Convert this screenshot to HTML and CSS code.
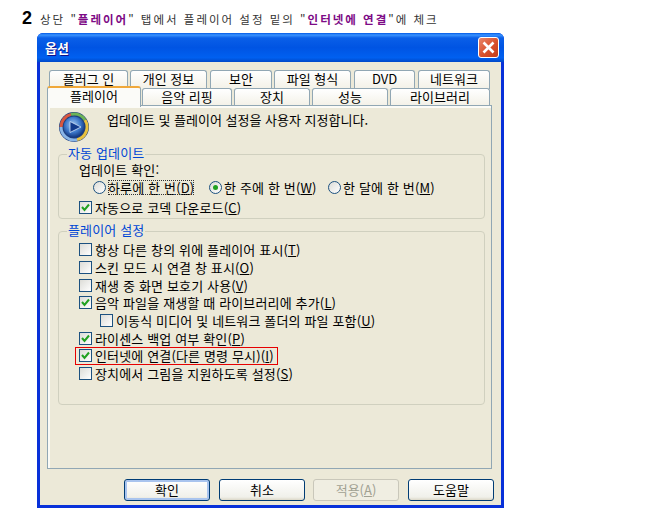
FILE: index.html
```html
<!DOCTYPE html>
<html lang="ko">
<head>
    <meta charset="UTF-8">
    <title>옵션</title>
    <link rel="stylesheet" href="styles.css">
</head>
<body>
    <div class="step">
        <span class="step-num">2</span>
        <p>상단 "<b>플레이어</b>" 탭에서 플레이어 설정 밑의 "<b>인터넷에 연결</b>"에 체크</p>
    </div>

    <div class="window">
        <div class="titlebar">
            <span class="title">옵션</span>
            <span class="close">
                <svg width="13" height="13" viewBox="0 0 13 13"><path d="M1.5 1.5 L11.5 11.5 M11.5 1.5 L1.5 11.5" stroke="#fff" stroke-width="2.6"/></svg>
            </span>
        </div>
        <div class="client">
            <div class="tabs tabs-back">
                <div class="tab">플러그 인</div>
                <div class="tab">개인 정보</div>
                <div class="tab">보안</div>
                <div class="tab">파일 형식</div>
                <div class="tab">DVD</div>
                <div class="tab">네트워크</div>
            </div>
            <div class="tabs tabs-front">
                <div class="tab active">플레이어</div>
                <div class="tab">음악 리핑</div>
                <div class="tab">장치</div>
                <div class="tab">성능</div>
                <div class="tab">라이브러리</div>
            </div>
            <div class="panel">
                <div class="intro">
                    <svg class="wmp" width="32" height="32" viewBox="0 0 32 32">
                        <defs>
                            <radialGradient id="disc" cx="45%" cy="40%" r="60%">
                                <stop offset="0" stop-color="#a9cdf5"/>
                                <stop offset="0.6" stop-color="#3c77c9"/>
                                <stop offset="1" stop-color="#12367f"/>
                            </radialGradient>
                        </defs>
                        <circle cx="16" cy="16" r="15" fill="#1e3f7e"/>
                        <path d="M3 16 A13 13 0 0 1 13 3.4" fill="none" stroke="#d9573f" stroke-width="3"/>
                        <path d="M13 3.4 A13 13 0 0 1 27 9" fill="none" stroke="#6cb356" stroke-width="3"/>
                        <path d="M27 9 A13 13 0 0 1 19 28.6" fill="none" stroke="#e9c23f" stroke-width="3"/>
                        <path d="M19 28.6 A13 13 0 0 1 3 16" fill="none" stroke="#8ab6e8" stroke-width="3"/>
                        <circle cx="16" cy="16" r="10.5" fill="url(#disc)"/>
                        <path d="M12 10.5 L23 16 L12 21.5 Z" fill="#123a8c" stroke="#cfe2f8" stroke-width="0.8"/>
                    </svg>
                    <p>업데이트 및 플레이어 설정을 사용자 지정합니다.</p>
                </div>

                <fieldset class="group group-update">
                    <legend>자동 업데이트</legend>
                    <div class="line label-line">업데이트 확인:</div>
                    <div class="line radios">
                        <label class="radio-day"><i class="radio"></i><span class="focus">하루에 한 번(<u>D</u>)</span></label>
                        <label class="radio-week"><i class="radio on"></i><span>한 주에 한 번(<u>W</u>)</span></label>
                        <label class="radio-month"><i class="radio"></i><span>한 달에 한 번(<u>M</u>)</span></label>
                    </div>
                    <div class="line"><i class="check"><svg width="11" height="11" viewBox="0 0 11 11"><path d="M2 5 L4.5 8 L9 2.5" fill="none" stroke="#21a121" stroke-width="2"/></svg></i>자동으로 코덱 다운로드(<u>C</u>)</div>
                </fieldset>

                <fieldset class="group group-player">
                    <legend>플레이어 설정</legend>
                    <div class="line"><i class="check"></i>항상 다른 창의 위에 플레이어 표시(<u>T</u>)</div>
                    <div class="line"><i class="check"></i>스킨 모드 시 연결 창 표시(<u>O</u>)</div>
                    <div class="line"><i class="check"></i>재생 중 화면 보호기 사용(<u>V</u>)</div>
                    <div class="line"><i class="check"><svg width="11" height="11" viewBox="0 0 11 11"><path d="M2 5 L4.5 8 L9 2.5" fill="none" stroke="#21a121" stroke-width="2"/></svg></i>음악 파일을 재생할 때 라이브러리에 추가(<u>L</u>)</div>
                    <div class="line sub"><i class="check"></i>이동식 미디어 및 네트워크 폴더의 파일 포함(<u>U</u>)</div>
                    <div class="line"><i class="check"><svg width="11" height="11" viewBox="0 0 11 11"><path d="M2 5 L4.5 8 L9 2.5" fill="none" stroke="#21a121" stroke-width="2"/></svg></i>라이센스 백업 여부 확인(<u>P</u>)</div>
                    <div class="line marked"><i class="check"><svg width="11" height="11" viewBox="0 0 11 11"><path d="M2 5 L4.5 8 L9 2.5" fill="none" stroke="#21a121" stroke-width="2"/></svg></i>인터넷에 연결(다른 명령 무시)(<u>I</u>)</div>
                    <div class="line"><i class="check"></i>장치에서 그림을 지원하도록 설정(<u>S</u>)</div>
                </fieldset>
            </div>
            <div class="buttons">
                <button class="btn default">확인</button>
                <button class="btn">취소</button>
                <button class="btn disabled">적용(<u>A</u>)</button>
                <button class="btn">도움말</button>
            </div>
        </div>
    </div>
</body>
</html>
```

FILE: styles.css
```css
* {
    margin: 0;
    padding: 0;
    box-sizing: border-box;
}

body {
    width: 650px;
    height: 518px;
    overflow: hidden;
    background-color: #fff;
    font-family: "Noto Sans CJK KR", "Liberation Sans", sans-serif;
    font-size: 13px;
    color: #000;
}

.step {
    display: flex;
    align-items: center;
    height: 33px;
    padding: 4px 0 0 22px;
}

.step-num {
    width: 18px;
    font-family: "Liberation Sans", sans-serif;
    font-size: 18px;
    font-weight: bold;
}

.step p {
    font-size: 11.5px;
    letter-spacing: 2px;
    color: #333;
}

.step b {
    color: #7d0a86;
}

.window {
    width: 467px;
    height: 475px;
    margin-left: 37px;
    background-color: #0831d9;
    border-radius: 6px 6px 0 0;
    display: flex;
    flex-direction: column;
}

.titlebar {
    display: flex;
    justify-content: space-between;
    align-items: center;
    height: 29px;
    padding: 0 5px 0 8px;
    border-radius: 6px 6px 0 0;
    background: linear-gradient(#0058e6 0, #3a93ff 2px, #0a5fe8 5px, #0054e3 50%, #0060f0 85%, #0048c8 100%);
}

.title {
    color: #fff;
    font-size: 13px;
    font-weight: bold;
    text-shadow: 1px 1px 0 #0f1089;
}

.close {
    display: flex;
    align-items: center;
    justify-content: center;
    width: 21px;
    height: 21px;
    border: 1px solid #fff;
    border-radius: 3px;
    background: linear-gradient(135deg, #e9866a, #d9512c 55%, #c23c1a);
}

.client {
    flex: 1;
    margin: 0 3px 3px;
    padding: 8px 11px 0 7px;
    background-color: #ece9d8;
}

.tabs {
    display: flex;
    font-size: 13px;
    line-height: 15px;
}

.tab {
    text-align: center;
    border: 1px solid #91a7b4;
    border-bottom: none;
    border-radius: 3px 3px 0 0;
    background: linear-gradient(#fff, #f3f1e7);
}

.tabs-back {
    height: 18px;
    padding-left: 2px;
}

.tabs-back .tab { height: 19px; }
.tabs-back .tab:nth-child(1) { width: 79px; margin-right: 2px; }
.tabs-back .tab:nth-child(2) { width: 77px; margin-right: 3px; }
.tabs-back .tab:nth-child(3) { width: 62px; margin-right: 2px; }
.tabs-back .tab:nth-child(4) { width: 77px; margin-right: 3px; }
.tabs-back .tab:nth-child(5) { width: 61px; margin-right: 3px; }
.tabs-back .tab:nth-child(6) { width: 72px; }

.tabs-front {
    position: relative;
    height: 17px;
}

.tabs-front .tab { height: 18px; }
.tabs-front .tab:nth-child(1) { width: 94px; margin-right: 1px; }
.tabs-front .tab:nth-child(2) { width: 90px; margin-right: 2px; }
.tabs-front .tab:nth-child(3) { width: 76px; margin-right: 2px; }
.tabs-front .tab:nth-child(4) { width: 76px; margin-right: 2px; }
.tabs-front .tab:nth-child(5) { width: 100px; }

.tabs-front .active {
    position: relative;
    z-index: 2;
    height: 21px;
    margin-top: -2px;
    border-top: 2px solid #f0a83a;
    background: #fbfbf8;
}

.panel {
    position: relative;
    height: 364px;
    padding: 0 6px 0 10px;
    border: 1px solid #91a7b4;
    box-shadow: inset 2px 2px 0 #fbfbf6;
    width: 445px;
}

.intro {
    display: flex;
    align-items: flex-start;
    height: 40px;
    padding-top: 5px;
}

.intro p {
    margin: -1px 0 0 17px;
}

.group {
    border: 1px solid #d0d0bf;
    border-radius: 4px;
    padding: 0 0 0 20px;
    width: 427px;
    letter-spacing: 0.15px;
}

.group legend {
    margin-left: -12px;
    padding: 0 1px 3px;
    color: #0046d5;
    line-height: 13px;
}

.group-update {
    height: 73px;
}

.group-player {
    height: 182px;
    margin-top: 4px;
    padding-top: 2px;
}

.line {
    display: flex;
    align-items: center;
    height: 17.7px;
    line-height: 15px;
    white-space: nowrap;
}

.label-line {
    height: 16px;
    margin-top: -1px;
}

.radios {
    height: 19px;
    margin: 1px 0 2px;
}

.radios label {
    display: flex;
    align-items: center;
}

.radio-day { margin-left: 14px; width: 116px; }
.radio-week { width: 119px; }

.sub {
    padding-left: 21px;
}

.marked {
    width: 203px;
    margin-left: -4px;
    padding-left: 4px;
    outline: 1px solid #e60000;
    outline-offset: -1px;
}

.focus {
    outline: 1px dotted #333;
    outline-offset: -1px;
}

.check {
    display: flex;
    align-items: center;
    justify-content: center;
    flex: none;
    width: 13px;
    height: 13px;
    margin-right: 3px;
    border: 1px solid #1c5180;
    background: linear-gradient(135deg, #dcdcd7, #fff);
}

.radio {
    position: relative;
    flex: none;
    width: 13px;
    height: 13px;
    margin-right: 2px;
    border: 1px solid #1c5180;
    border-radius: 50%;
    background: linear-gradient(135deg, #dcdcd7, #fff);
}

.radio.on::after {
    content: "";
    position: absolute;
    left: 3px;
    top: 3px;
    width: 5px;
    height: 5px;
    border-radius: 50%;
    background-color: #21a121;
}

.buttons {
    display: flex;
    gap: 9px;
    justify-content: flex-end;
    margin: 10px -4px 0 0;
}

.btn {
    width: 86px;
    height: 22px;
    font: inherit;
    line-height: 18px;
    border: 1px solid #003c74;
    border-radius: 3px;
    background: linear-gradient(#fff, #f0f0ea 85%, #dcd8c8);
}

.btn.default {
    box-shadow: inset 0 0 0 2px #a9c4ee;
}

.btn.disabled {
    margin-left: -1px;
    color: #a1a192;
    border-color: #c9c7ba;
    background: #f0eee2;
}
```
